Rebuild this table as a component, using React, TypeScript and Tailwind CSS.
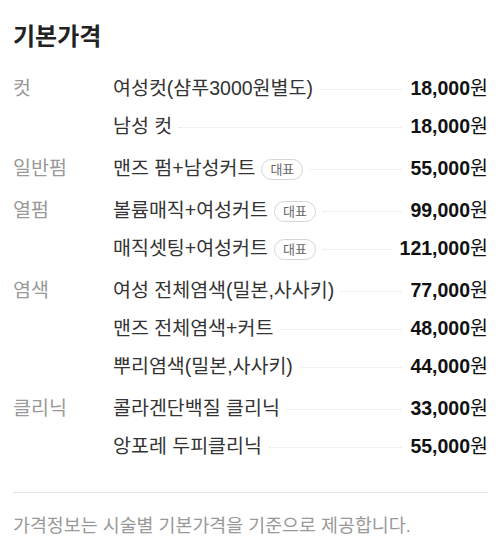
import React from "react";

type Item = { name: string; price: string; badge?: boolean };
type Group = { cat: string; items: Item[] };

const groups: Group[] = [
  { cat: "컷", items: [ { name: "여성컷(샴푸3000원별도)", price: "18,000" }, { name: "남성 컷", price: "18,000" } ] },
  { cat: "일반펌", items: [ { name: "맨즈 펌+남성커트", price: "55,000", badge: true } ] },
  { cat: "열펌", items: [ { name: "볼륨매직+여성커트", price: "99,000", badge: true }, { name: "매직셋팅+여성커트", price: "121,000", badge: true } ] },
  { cat: "염색", items: [ { name: "여성 전체염색(밀본,사사키)", price: "77,000" }, { name: "맨즈 전체염색+커트", price: "48,000" }, { name: "뿌리염색(밀본,사사키)", price: "44,000" } ] },
  { cat: "클리닉", items: [ { name: "콜라겐단백질 클리닉", price: "33,000" }, { name: "앙포레 두피클리닉", price: "55,000" } ] },
];

export default function App() {
  return (
    <div
      className="w-[502px] h-[554px] bg-white pl-[13px] pr-[14px] pt-[21px]"
      style={{ fontFamily: '"Liberation Sans", "Noto Sans CJK KR", sans-serif' }}
    >
      <h2 className="text-[24px] leading-[32px] font-bold text-[#222]">기본가격</h2>
      <div className="mt-[17px] flex flex-col gap-[4px]">
        {groups.map((g) => (
          <div key={g.cat} className="flex">
            <div className="w-[100px] shrink-0 h-[38px] flex items-center text-[19.5px] text-[#999]">{g.cat}</div>
            <div className="flex-1 flex flex-col">
              {g.items.map((it) => (
                <div key={it.name} className="h-[38px] flex items-center">
                  <span className="text-[19.5px] text-[#333] whitespace-nowrap">{it.name}</span>
                  {it.badge && (
                    <span className="ml-[6px] h-[21px] px-[8px] rounded-full border border-[#d5d5d5] bg-white text-[13px] leading-[19px] text-[#666] flex items-center">
                      대표
                    </span>
                  )}
                  <span className="flex-1 ml-[7px] mr-[9px] border-b border-dotted border-[#e3e3e3] h-0 mt-[1px]" />
                  <span className="text-[19.5px] font-bold text-[#111] whitespace-nowrap">
                    {it.price}
                    <span className="font-normal">원</span>
                  </span>
                </div>
              ))}
            </div>
          </div>
        ))}
      </div>
      <div className="mt-[26px] border-t border-[#e5e5e5]" />
      <p className="mt-[21px] text-[18.4px] leading-[24px] text-[#999]">가격정보는 시술별 기본가격을 기준으로 제공합니다.</p>
    </div>
  );
}
